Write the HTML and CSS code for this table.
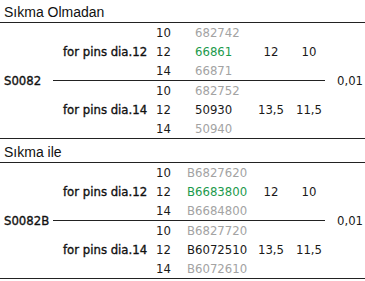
FILE: index.html
```html
<!DOCTYPE html>
<html>
<head>
<meta charset="utf-8">
<link rel="stylesheet" href="styles.css">
</head>
<body>
<div class="sheet">
  <section class="sec sec-a">
    <div class="sec-title">Sıkma Olmadan</div>
    <div class="sec-body">
      <div class="label">S0082</div>
      <div class="groups">
        <div class="group">
          <div class="pins">for pins dia.12</div>
          <div class="size">10</div><div class="code grey">682742</div><div class="dia"></div><div class="sec2"></div>
          <div class="size">12</div><div class="code green">66861</div><div class="dia">12</div><div class="sec2">10</div>
          <div class="size">14</div><div class="code grey">66871</div><div class="dia"></div><div class="sec2"></div>
        </div>
        <div class="group">
          <div class="pins">for pins dia.14</div>
          <div class="size">10</div><div class="code grey">682752</div><div class="dia"></div><div class="sec2"></div>
          <div class="size">12</div><div class="code">50930</div><div class="dia">13,5</div><div class="sec2">11,5</div>
          <div class="size">14</div><div class="code grey">50940</div><div class="dia"></div><div class="sec2"></div>
        </div>
      </div>
      <div class="value">0,01</div>
    </div>
  </section>
  <section class="sec sec-b">
    <div class="sec-title">Sıkma ile</div>
    <div class="sec-body">
      <div class="label">S0082B</div>
      <div class="groups">
        <div class="group">
          <div class="pins">for pins dia.12</div>
          <div class="size">10</div><div class="code grey">B6827620</div><div class="dia"></div><div class="sec2"></div>
          <div class="size">12</div><div class="code green">B6683800</div><div class="dia">12</div><div class="sec2">10</div>
          <div class="size">14</div><div class="code grey">B6684800</div><div class="dia"></div><div class="sec2"></div>
        </div>
        <div class="group">
          <div class="pins">for pins dia.14</div>
          <div class="size">10</div><div class="code grey">B6827720</div><div class="dia"></div><div class="sec2"></div>
          <div class="size">12</div><div class="code">B6072510</div><div class="dia">13,5</div><div class="sec2">11,5</div>
          <div class="size">14</div><div class="code grey">B6072610</div><div class="dia"></div><div class="sec2"></div>
        </div>
      </div>
      <div class="value">0,01</div>
    </div>
  </section>
</div>
</body>
</html>
```
FILE: styles.css
```css
html, body {
  margin: 0;
  padding: 0;
  background: #ffffff;
}
.sheet {
  width: 365px;
  color: #1a1a1a;
}
.sec-title {
  font-family: "Liberation Sans", Arial, sans-serif;
  font-size: 14px;
  line-height: 19px;
  height: 19px;
  padding: 3px 0 0 4px;
  border-bottom: 1px solid #222;
  color: #111;
}
.sec-b .sec-title {
  padding-top: 4px;
}
.sec-body {
  display: flex;
  border-bottom: 1px solid #222;
  font-family: "DejaVu Sans Condensed", "DejaVu Sans", sans-serif;
  font-stretch: condensed;
  font-size: 13px;
}
.label {
  width: 53px;
  box-sizing: border-box;
  padding-left: 4px;
  display: flex;
  align-items: center;
  color: #111;
  -webkit-text-stroke: 0.35px #111;
}
.groups {
  width: 272px;
  display: flex;
  flex-direction: column;
}
.group {
  display: grid;
  grid-template-columns: 100px 18px 78px 44px 32px;
  grid-template-rows: 19px 19px 19px;
  line-height: 19px;
}
.group + .group {
  border-top: 1px solid #222;
}
.pins {
  grid-row: 1 / 4;
  grid-column: 1;
  padding-left: 10px;
  align-self: center;
  color: #111;
  -webkit-text-stroke: 0.35px #111;
}
.size {
  text-align: right;
}
.code {
  padding-left: 24px;
  white-space: nowrap;
}
.sec-b .code {
  padding-left: 16px;
}
.dia, .sec2 {
  text-align: center;
}
.grey {
  color: #a3a3a3;
}
.green {
  color: #1c9a4c;
}
.value {
  flex: 1;
  padding-left: 12px;
  display: flex;
  align-items: center;
}
```
